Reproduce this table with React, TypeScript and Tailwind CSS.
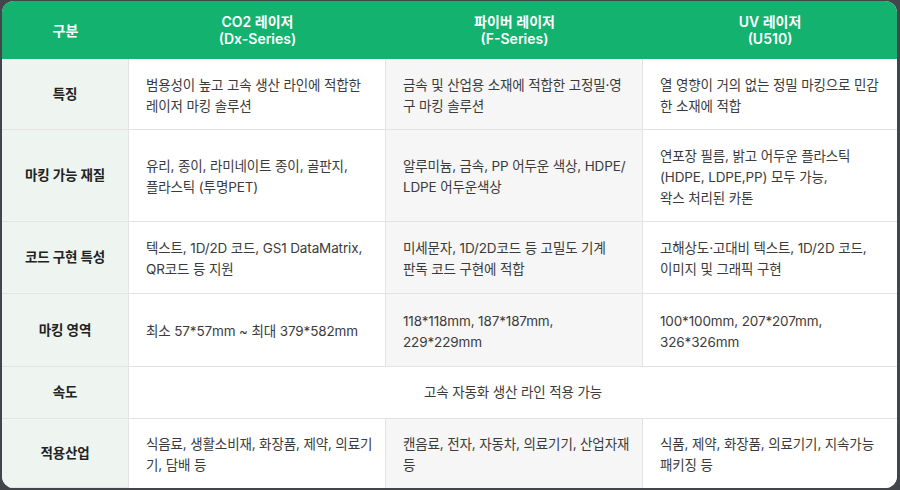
import React from 'react';

type Row = {
  label: string;
  cells: string[][];
  span?: boolean;
};

const rows: Row[] = [
  {
    label: '특징',
    cells: [
      ['범용성이 높고 고속 생산 라인에 적합한', '레이저 마킹 솔루션'],
      ['금속 및 산업용 소재에 적합한 고정밀·영', '구 마킹 솔루션'],
      ['열 영향이 거의 없는 정밀 마킹으로 민감', '한 소재에 적합'],
    ],
  },
  {
    label: '마킹 가능 재질',
    cells: [
      ['유리, 종이, 라미네이트 종이, 골판지,', '플라스틱 (투명PET)'],
      ['알루미늄, 금속, PP 어두운 색상, HDPE/', 'LDPE 어두운색상'],
      ['연포장 필름, 밝고 어두운 플라스틱', '(HDPE, LDPE,PP) 모두 가능,', '왁스 처리된 카톤'],
    ],
  },
  {
    label: '코드 구현 특성',
    cells: [
      ['텍스트, 1D/2D 코드, GS1 DataMatrix,', 'QR코드 등 지원'],
      ['미세문자, 1D/2D코드 등 고밀도 기계', '판독 코드 구현에 적합'],
      ['고해상도·고대비 텍스트, 1D/2D 코드,', '이미지 및 그래픽 구현'],
    ],
  },
  {
    label: '마킹 영역',
    cells: [
      ['최소 57*57mm ~ 최대 379*582mm'],
      ['118*118mm, 187*187mm,', '229*229mm'],
      ['100*100mm, 207*207mm,', '326*326mm'],
    ],
  },
  {
    label: '속도',
    span: true,
    cells: [['고속 자동화 생산 라인 적용 가능']],
  },
  {
    label: '적용산업',
    cells: [
      ['식음료, 생활소비재, 화장품, 제약, 의료기', '기, 담배 등'],
      ['캔음료, 전자, 자동차, 의료기기, 산업자재', '등'],
      ['식품, 제약, 화장품, 의료기기, 지속가능', '패키징 등'],
    ],
  },
];

const headers = [
  ['CO2 레이저', '(Dx-Series)'],
  ['파이버 레이저', '(F-Series)'],
  ['UV 레이저', '(U510)'],
];

const cellBg = ['bg-white', 'bg-[#f6f6f6]', 'bg-white'];

const Lines = ({ lines }: { lines: string[] }) => (
  <div className="flex flex-col">
    {lines.map((l, i) => (
      <span key={i} className="whitespace-nowrap">{l}</span>
    ))}
  </div>
);

export default function App() {
  return (
    <div className="w-[900px] h-[490px] bg-[#42464c] pt-px pl-[2px] pr-[3px] pb-[2px]">
      <div
        className="h-full w-full rounded-[12px] overflow-hidden bg-white grid grid-cols-[127px_257px_257px_1fr] grid-rows-[58px_71px_92px_72px_73px_52px_1fr] text-[13.5px] leading-[21px] tracking-[-0.01em] text-[#3b3b3b]"
        style={{ fontFamily: '"Inter", "Noto Sans CJK KR", sans-serif' }}
      >
        {/* header */}
        <div className="bg-[#14b26f] text-white text-[14px] tracking-normal font-semibold flex items-center justify-center leading-[17px]">
          구분
        </div>
        {headers.map((h, i) => (
          <div
            key={i}
            className="bg-[#14b26f] text-white text-[14px] tracking-normal font-semibold flex flex-col items-center justify-center leading-[17px]"
          >
            <span>{h[0]}</span>
            <span>{h[1]}</span>
          </div>
        ))}

        {rows.map((row, ri) => (
          <React.Fragment key={ri}>
            <div className="bg-[#eef5f0] border-r border-b border-[#e3e3e3] flex items-center justify-center font-semibold text-[#222]">
              {row.label}
            </div>
            {row.span ? (
              <div className="col-span-3 bg-white border-b border-[#e3e3e3] flex items-center justify-center">
                <Lines lines={row.cells[0]} />
              </div>
            ) : (
              row.cells.map((c, ci) => (
                <div
                  key={ci}
                  className={`${cellBg[ci]} ${ri === rows.length - 1 ? '' : 'border-b'} ${ci < 2 ? 'border-r' : ''} border-[#e3e3e3] flex items-center px-[17px] pt-[3px]`}
                >
                  <Lines lines={c} />
                </div>
              ))
            )}
          </React.Fragment>
        ))}
      </div>
    </div>
  );
}
